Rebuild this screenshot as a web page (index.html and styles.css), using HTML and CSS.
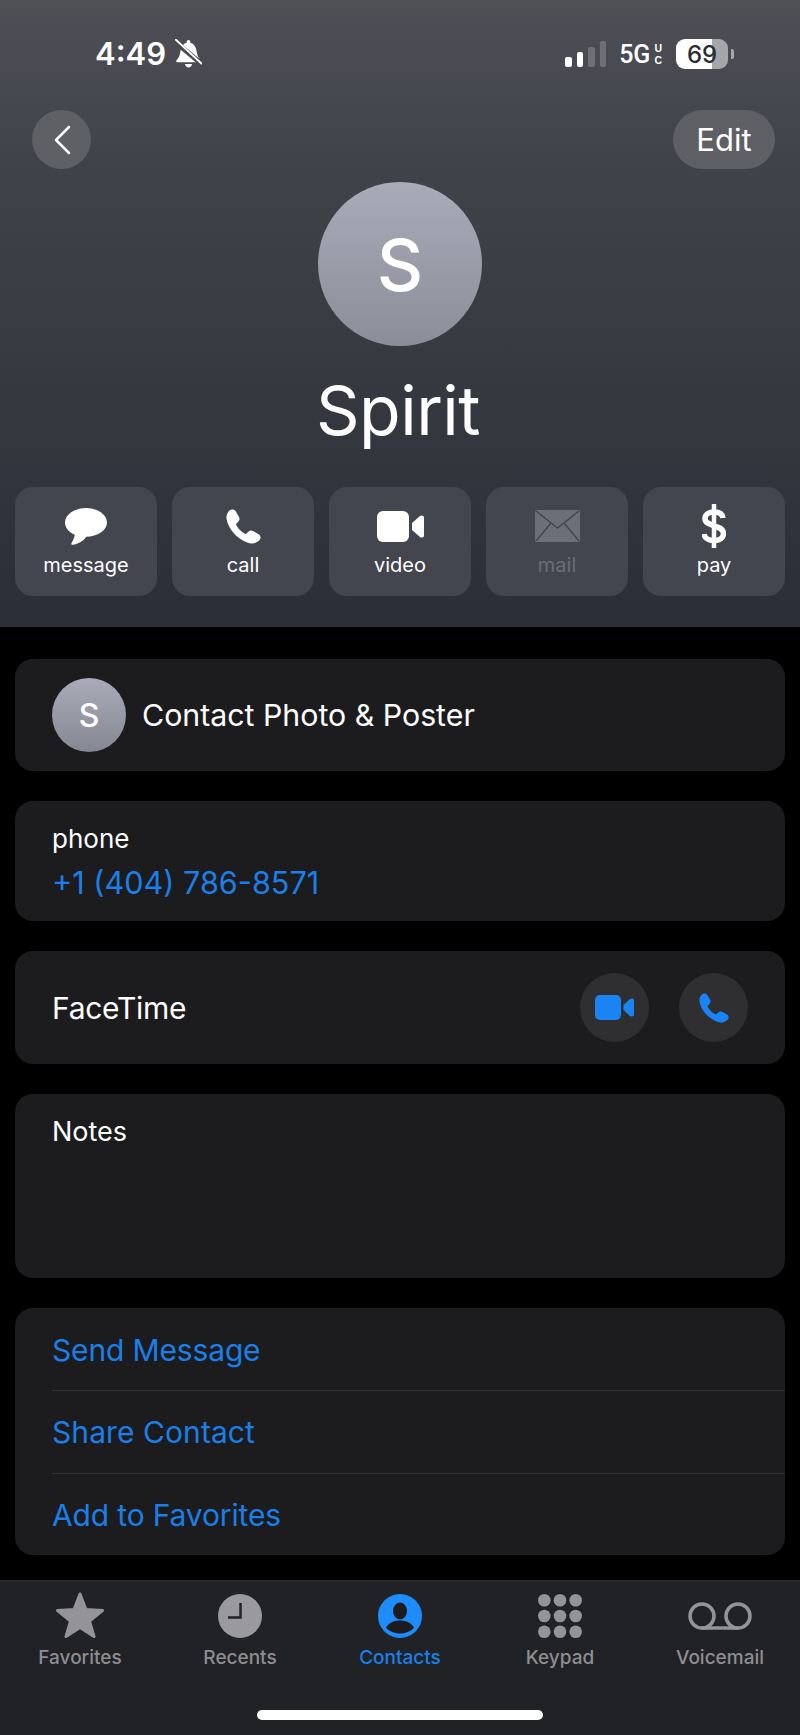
FILE: index.html
```html
<!DOCTYPE html>
<html lang="en">
<head>
    <meta charset="UTF-8">
    <meta name="viewport" content="width=device-width, initial-scale=1.0">
    <title>Spirit</title>
    <link rel="stylesheet" href="styles.css">
</head>
<body>
    <header class="contact-header">
        <div class="status-bar">
            <div class="status-left">
                <span class="status-time">4:49</span>
                <svg class="bell-icon" viewBox="0 0 27 30">
                    <path fill="#fff" d="M13.5 1c1.100 0 1.800.7 1.800 1.800v1c3.700 1 5.700 4 6.200 8 .5 4 1.500 7 4 9.500.8 1 .3 2-1 2H2.500c-1.300 0-1.800-1-1-2 2.500-2.500 3.500-5.500 4-9.500.5-4 2.500-7 6.200-8v-1c0-1.100.7-1.800 1.800-1.800z"/>
                    <path fill="#fff" d="M10 25h7c-.3 2-1.700 3.500-3.500 3.500S10.300 27 10 25z"/>
                    <path stroke="#484a51" stroke-width="5" d="M-2 1l30 25"/>
                    <path stroke="#fff" stroke-width="2" d="M0 0l27 25"/>
                </svg>
            </div>
            <div class="status-right">
                <div class="signal">
                    <span class="signal-bar bar-1"></span>
                    <span class="signal-bar bar-2"></span>
                    <span class="signal-bar bar-3"></span>
                    <span class="signal-bar bar-4"></span>
                </div>
                <span class="network">5G</span>
                <span class="network-uc">U<br>C</span>
                <div class="battery"><span class="battery-level">69</span></div>
                <span class="battery-cap"></span>
            </div>
        </div>

        <div class="nav-row">
            <div class="back-button">
                <svg class="back-icon" viewBox="0 0 18 30">
                    <path fill="none" stroke="#fff" stroke-width="2.5" stroke-linecap="round" stroke-linejoin="round" d="M16 2L3 15l13 13"/>
                </svg>
            </div>
            <div class="edit-button">Edit</div>
        </div>

        <div class="avatar">S</div>
        <h1 class="contact-name">Spirit</h1>

        <div class="actions">
            <div class="action">
                <div class="action-slot">
                    <svg class="icon-message" viewBox="0 0 42 37">
                        <path fill="#fff" d="M21 0C9.400 0 0 6.500 0 14.500c0 5.200 3.900 9.800 9.800 12.300-.4 3-2 6-3.300 8.200-.6 1 0 2 1.200 1.800 5.500-.8 11-4 13.500-8.100h-.2C32.600 28.700 42 22.500 42 14.500S32.600 0 21 0z"/>
                    </svg>
                </div>
                <span>message</span>
            </div>
            <div class="action">
                <div class="action-slot">
                    <svg class="icon-call" viewBox="0 0 35 35">
                        <path fill="#fff" d="M3 2C5 0 8 0 9.500 2L13 8C14 10 13.500 11.500 12 13L10.500 14.500C10 15 10 15.800 10.500 16.500C12.500 20 15 22.500 18.500 24.500C19.200 25 20 25 20.500 24.500L22 23C23.500 21.500 25 21 27 22L33 25.500C35 27 35 29.500 33.500 31C31 33.500 28 35 25 34.500C19 33.500 13 29.500 8.500 25C4 20 1 14.500 .5 9.500C.2 7 1 4 3 2z"/>
                    </svg>
                </div>
                <span>call</span>
            </div>
            <div class="action">
                <div class="action-slot">
                    <svg class="icon-video" viewBox="0 0 47 31">
                        <rect width="32" height="31" rx="6" fill="#fff"/>
                        <path fill="#fff" d="M35 12l8-7c1.500-1.200 4-.5 4 1.500v18c0 2-2.500 2.700-4 1.500l-8-7z"/>
                    </svg>
                </div>
                <span>video</span>
            </div>
            <div class="action action-disabled">
                <div class="action-slot">
                    <svg class="icon-mail" viewBox="0 0 45 32">
                        <rect width="45" height="32" rx="1.5" fill="#6c6e78"/>
                        <path fill="none" stroke="#43454f" stroke-width="1.5" d="M1 1l21.500 17L44 1M1 31l15-18M44 31L29 13"/>
                    </svg>
                </div>
                <span>mail</span>
            </div>
            <div class="action">
                <div class="action-slot">
                    <svg class="icon-pay" viewBox="0 0 24 44">
                        <path fill="none" stroke="#fff" stroke-width="5.5" d="M21 14c-.5-4-4-6-9-6s-9 2.500-9 6.500c0 9 18.500 5.500 18.500 15 0 4.500-4 7-9.500 7S2.500 34 2 30"/>
                        <path stroke="#fff" stroke-width="4.5" d="M12 0v44"/>
                    </svg>
                </div>
                <span>pay</span>
            </div>
        </div>
    </header>

    <main class="content">
        <section class="card photo-card">
            <div class="avatar-small">S</div>
            <div class="photo-label">Contact Photo &amp; Poster</div>
        </section>

        <section class="card phone-card">
            <div class="phone-label">phone</div>
            <div class="phone-number">+1 (404) 786-8571</div>
        </section>

        <section class="card facetime-card">
            <div class="facetime-label">FaceTime</div>
            <div class="facetime-buttons">
                <div class="round-button">
                    <svg class="video-small" viewBox="0 0 39 25">
                        <rect width="26" height="25" rx="5" fill="#1a84f4"/>
                        <path fill="#1a84f4" d="M28.500 10l6.500-6c1.300-1 4-.5 4 1.300v14.400c0 1.800-2.700 2.300-4 1.300l-6.500-6z"/>
                    </svg>
                </div>
                <div class="round-button">
                    <svg class="phone-small" viewBox="0 0 35 35">
                        <path fill="#1a84f4" d="M3 2C5 0 8 0 9.500 2L13 8C14 10 13.500 11.500 12 13L10.500 14.500C10 15 10 15.800 10.500 16.500C12.500 20 15 22.500 18.500 24.500C19.200 25 20 25 20.500 24.500L22 23C23.500 21.500 25 21 27 22L33 25.500C35 27 35 29.500 33.500 31C31 33.500 28 35 25 34.500C19 33.500 13 29.500 8.500 25C4 20 1 14.500 .5 9.500C.2 7 1 4 3 2z"/>
                    </svg>
                </div>
            </div>
        </section>

        <section class="card notes-card">Notes</section>

        <section class="card links-card">
            <div class="link-row">Send Message</div>
            <div class="link-row link-share">Share Contact</div>
            <div class="link-row">Add to Favorites</div>
        </section>
    </main>

    <nav class="tab-bar">
        <div class="tabs">
            <div class="tab">
                <svg class="tab-icon icon-star" viewBox="0 0 48 46">
                    <path fill="#949498" stroke="#949498" stroke-width="3" stroke-linejoin="round" d="M24 2l6 15.500 16.500 1-13 10.500 4.500 15.500L24 35.500 10 44.500 14.500 29l-13-10.500 16.500-1z"/>
                </svg>
                <span>Favorites</span>
            </div>
            <div class="tab">
                <svg class="tab-icon" viewBox="0 0 44 44">
                    <circle cx="22" cy="22" r="22" fill="#9a9a9e"/>
                    <path fill="none" stroke="#222326" stroke-width="2.5" d="M22.500 9v14.500H10"/>
                </svg>
                <span>Recents</span>
            </div>
            <div class="tab tab-active">
                <svg class="tab-icon" viewBox="0 0 44 44">
                    <circle cx="22" cy="22" r="22" fill="#1e8cfa"/>
                    <ellipse cx="22" cy="17" rx="7" ry="8.5" fill="#1b1c1f"/>
                    <path fill="#1b1c1f" d="M8 34c2-5 7.500-7.500 14-7.500S34 29 36 34c-3.500 3.500-8.500 5.500-14 5.500S11.500 37.500 8 34z"/>
                </svg>
                <span>Contacts</span>
            </div>
            <div class="tab">
                <svg class="tab-icon" viewBox="0 0 44 44">
                    <g fill="#949498">
                        <circle cx="6.300" cy="6.300" r="6.300"/><circle cx="22" cy="6.300" r="6.300"/><circle cx="37.700" cy="6.300" r="6.300"/>
                        <circle cx="6.300" cy="22" r="6.300"/><circle cx="22" cy="22" r="6.300"/><circle cx="37.700" cy="22" r="6.300"/>
                        <circle cx="6.300" cy="37.700" r="6.300"/><circle cx="22" cy="37.700" r="6.300"/><circle cx="37.700" cy="37.700" r="6.300"/>
                    </g>
                </svg>
                <span>Keypad</span>
            </div>
            <div class="tab">
                <svg class="tab-icon icon-voicemail" viewBox="0 0 64 28">
                    <g fill="none" stroke="#949498" stroke-width="3.5">
                        <circle cx="14" cy="14" r="12"/>
                        <circle cx="50" cy="14" r="12"/>
                        <path d="M14 26h36"/>
                    </g>
                </svg>
                <span>Voicemail</span>
            </div>
        </div>
        <div class="home-indicator"></div>
    </nav>
</body>
</html>
```

FILE: styles.css
```css
* {
    box-sizing: border-box;
}

body {
    background-color: #000;
    color: #fff;
    font-family: Inter, "Liberation Sans", sans-serif;
    margin: 0;
    width: 800px;
    height: 1735px;
    display: flex;
    flex-direction: column;
    overflow: hidden;
}

.contact-header {
    height: 627px;
    padding: 0 15px;
    background: linear-gradient(180deg, #4f5056 0%, #41434b 25%, #2c2e37 100%);
}

.status-bar {
    height: 110px;
    padding: 36px 51px 0 80px;
    display: flex;
    justify-content: space-between;
    align-items: flex-start;
}

.status-left {
    display: flex;
    align-items: center;
    gap: 9px;
}

.status-time {
    font-size: 31px;
    font-weight: 600;
    line-height: 36px;
}

.bell-icon {
    width: 27px;
    height: 30px;
}

.status-right {
    display: flex;
    align-items: center;
    height: 36px;
}

.signal {
    display: flex;
    align-items: flex-end;
    gap: 5px;
    height: 26px;
    margin-right: 13px;
}

.signal-bar {
    width: 6.5px;
    border-radius: 2px;
    background: #fff;
}

.bar-1 {
    height: 10px;
}

.bar-2 {
    height: 15px;
}

.bar-3 {
    height: 20px;
    background: #6f7075;
}

.bar-4 {
    height: 26px;
    background: #6f7075;
}

.network {
    font-family: Roboto, sans-serif;
    font-size: 25px;
    font-weight: 500;
}

.network-uc {
    font-family: "Liberation Sans", sans-serif;
    font-size: 10.5px;
    font-weight: 700;
    line-height: 12.2px;
    margin: 0 14px 0 4px;
}

.battery {
    width: 52px;
    height: 30px;
    border-radius: 9px;
    background: linear-gradient(90deg, #fff 0%, #fff 69%, #a5a6aa 69%, #a5a6aa 100%);
    display: flex;
    align-items: center;
    justify-content: center;
}

.battery-level {
    color: #2c2d33;
    font-size: 24px;
    font-weight: 500;
}

.battery-cap {
    width: 3px;
    height: 10px;
    margin-left: 3px;
    border-radius: 0 2px 2px 0;
    background: #a5a6aa;
}

.nav-row {
    height: 59px;
    padding: 0 10px 0 17px;
    display: flex;
    justify-content: space-between;
}

.back-button {
    width: 59px;
    height: 59px;
    border-radius: 50%;
    background: #5f6066;
    display: flex;
    align-items: center;
    justify-content: center;
}

.back-icon {
    width: 18px;
    height: 30px;
}

.edit-button {
    width: 102px;
    height: 59px;
    border-radius: 30px;
    background: #5f6066;
    font-size: 31px;
    display: flex;
    align-items: center;
    justify-content: center;
}

.avatar {
    width: 164px;
    height: 164px;
    margin: 13px auto 0;
    border-radius: 50%;
    background: linear-gradient(180deg, #a9acb8, #8b8e99);
    font-size: 72px;
    font-weight: 500;
    display: flex;
    align-items: center;
    justify-content: center;
}

.contact-name {
    margin: 21px 0 0;
    height: 95px;
    padding-right: 4px;
    font-size: 68px;
    font-weight: 400;
    letter-spacing: -0.5px;
    line-height: 86px;
    text-align: center;
}

.actions {
    margin-top: 25px;
    display: grid;
    grid-template-columns: repeat(5, 142px);
    gap: 15px;
}

.action {
    height: 109px;
    padding-top: 17px;
    border-radius: 18px;
    background: #43454f;
    font-size: 20px;
    display: flex;
    flex-direction: column;
    align-items: center;
}

.action-slot {
    height: 44px;
    margin-bottom: 5px;
    display: flex;
    align-items: center;
    justify-content: center;
}

.icon-message {
    width: 42px;
    height: 37px;
}

.icon-call {
    width: 35px;
    height: 35px;
}

.icon-video {
    width: 47px;
    height: 31px;
}

.icon-mail {
    width: 45px;
    height: 32px;
}

.icon-pay {
    width: 24px;
    height: 44px;
}

.action-disabled {
    color: #6c6e77;
}

.content {
    padding: 32px 15px 0;
    display: flex;
    flex-direction: column;
    gap: 30px;
    height: 953px;
}

.card {
    border-radius: 18px;
    background: #1c1c1e;
    font-size: 30px;
}

.photo-card {
    height: 112px;
    padding: 0 37px;
    display: flex;
    align-items: center;
    gap: 16px;
}

.photo-label {
    font-size: 30.3px;
}

.avatar-small {
    width: 74px;
    height: 74px;
    border-radius: 50%;
    background: linear-gradient(180deg, #a9acb8, #858893);
    font-size: 32px;
    font-weight: 500;
    display: flex;
    align-items: center;
    justify-content: center;
}

.phone-card {
    height: 120px;
    padding: 21px 37px 0;
}

.phone-label {
    font-size: 26px;
    line-height: 34px;
}

.phone-number {
    margin-top: 8px;
    font-size: 30.6px;
    line-height: 38px;
    color: #1a7fe8;
}

.facetime-card {
    height: 113px;
    padding: 0 37px;
    display: flex;
    align-items: center;
    justify-content: space-between;
}

.facetime-label {
    letter-spacing: -0.3px;
}

.facetime-buttons {
    display: flex;
    gap: 30px;
}

.round-button {
    width: 69px;
    height: 69px;
    border-radius: 50%;
    background: #2f2f31;
    display: flex;
    align-items: center;
    justify-content: center;
}

.video-small {
    width: 39px;
    height: 25px;
}

.phone-small {
    width: 30px;
    height: 30px;
}

.notes-card {
    height: 184px;
    padding: 21px 37px 0;
    font-size: 27px;
    line-height: 34px;
}

.links-card {
    height: 247px;
    padding-left: 37px;
}

.link-row {
    height: 82.3px;
    padding-top: 1px;
    display: flex;
    align-items: center;
    color: #1a7fe8;
    font-size: 30px;
    letter-spacing: -0.15px;
    border-top: 1px solid #323234;
}

.link-row:first-child {
    border-top: none;
}

.link-share {
    letter-spacing: 0.08px;
}

.tab-bar {
    flex: 1;
    padding-top: 13px;
    background: #212225;
    border-top: 1px solid #2c2c2e;
    position: relative;
}

.tabs {
    display: grid;
    grid-template-columns: repeat(5, 160px);
}

.tab {
    display: flex;
    flex-direction: column;
    align-items: center;
    color: #8e8e92;
    font-size: 19px;
    font-weight: 500;
}

.tab-icon {
    width: 44px;
    height: 44px;
    margin-bottom: 8px;
}

.icon-star {
    width: 48px;
    height: 46px;
    margin-top: -2px;
}

.icon-voicemail {
    width: 64px;
    height: 28px;
    margin-top: 8px;
    margin-bottom: 16px;
}

.tab-active {
    color: #1a7fe8;
}

.home-indicator {
    position: absolute;
    left: 257px;
    bottom: 15px;
    width: 286px;
    height: 10px;
    border-radius: 5px;
    background: #fff;
}
```
